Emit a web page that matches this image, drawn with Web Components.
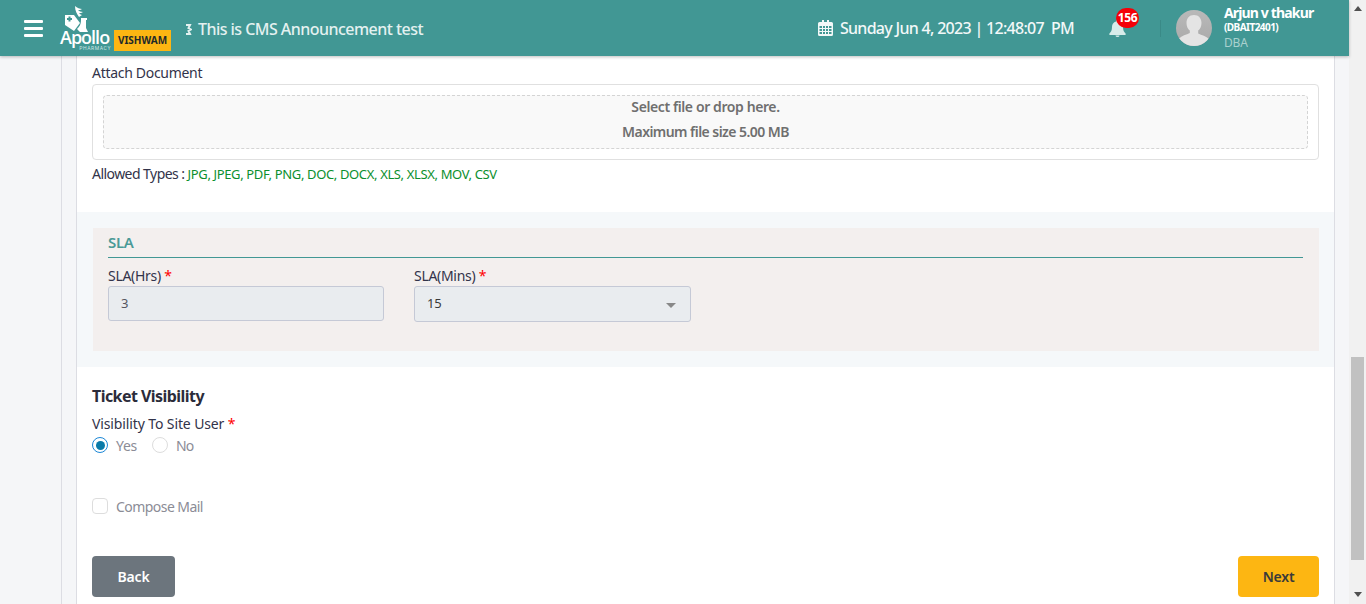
<!DOCTYPE html>
<html>
<head>
<meta charset="utf-8">
<title>Vishwam</title>
<style>
    html, body { margin: 0; height: 100%; overflow: hidden; }
    body { font-family: "Noto Sans", "Open Sans", sans-serif; font-size: 14px; color: #32334a; }
</style>
</head>
<body>
<app-shell>
    <app-header slot="header"></app-header>
    <attach-field></attach-field>
    <sla-panel></sla-panel>
    <ticket-visibility></ticket-visibility>
    <form-actions></form-actions>
</app-shell>

<script>
class AppShell extends HTMLElement {
    constructor() {
        super();
        this.attachShadow({ mode: 'open' });
    }
    connectedCallback() {
        this.shadowRoot.innerHTML = /*HTML*/ `
            <style>
                :host { display: flex; height: 604px; overflow: hidden; }
                .page { flex: 1; min-width: 0; display: flex; flex-direction: column; background: #f5f6f8; }
                .columns { flex: 1; display: flex; min-height: 0; }
                .rail { width: 61px; border-right: 1px solid #dcdde3; }
                .gutter { width: 14px; border-right: 1px solid #dcdde3; }
                .card { width: 1257px; background: #fff; border-right: 1px solid #dcdde3; }
                .track { width: 17px; background: #f1f1f1; display: flex; flex-direction: column; align-items: center; }
                .arrow-up { margin-top: 6px; border: 4px solid transparent; border-top: 0; border-bottom: 5px solid #505050; }
                .thumb { margin-top: 346px; width: 13px; height: 203px; background: #c1c1c1; }
                .arrow-down { margin-top: 32px; border: 4px solid transparent; border-bottom: 0; border-top: 5px solid #505050; }
            </style>
            <div class="page">
                <slot name="header"></slot>
                <div class="columns">
                    <div class="rail"></div>
                    <div class="gutter"></div>
                    <main class="card"><slot></slot></main>
                </div>
            </div>
            <div class="track">
                <span class="arrow-up"></span>
                <span class="thumb"></span>
                <span class="arrow-down"></span>
            </div>
        `;
    }
}
customElements.define('app-shell', AppShell);

class AppHeader extends HTMLElement {
    constructor() {
        super();
        this.attachShadow({ mode: 'open' });
    }
    connectedCallback() {
        this.shadowRoot.innerHTML = /*HTML*/ `
            <style>
                :host { display: flex; align-items: center; height: 56px; background: #419794; color: #fff; box-shadow: 0 1px 3px rgba(0,0,0,.25); position: relative; z-index: 2; }
                .menu { width: 19px; margin-left: 24px; display: flex; flex-direction: column; gap: 4px; }
                .menu i { display: block; height: 3px; background: #fff; border-radius: 1px; }
                .brand { margin-left: 17px; width: 111px; height: 56px; display: flex; align-items: flex-end; flex-shrink: 0; }
                .logo { width: 51px; height: 50px; margin-bottom: 5px; display: flex; flex-direction: column; align-items: flex-start; justify-content: flex-end; }
                .logo svg { margin-left: 5px; display: block; }
                .apollo { font: 600 18px/13px "Open Sans", sans-serif; letter-spacing: -1px; margin-top: -1px; }
                .pharmacy { font: 400 5px/6px "Roboto", sans-serif; letter-spacing: .6px; align-self: flex-end; color: #cfe5e3; margin-top: 1px; }
                .vishwam { margin: 0 0 5px 3px; width: 57px; height: 21px; background: #fdb612; color: #1f2a2a; font: 700 10px/21px "Noto Sans", sans-serif; text-align: center; }
                .news { margin-left: 14px; display: flex; align-items: center; gap: 6px; font-size: 16px; font-weight: 500; color: #e4f1f0; white-space: nowrap; letter-spacing: -.54px; padding-top: 2px; }
                .clock { margin-left: auto; display: flex; align-items: center; gap: 7px; font-size: 16px; font-weight: 500; white-space: pre; color: #f2f8f8; letter-spacing: -.7px; }
                .bell { margin-left: 35px; position: relative; width: 17px; height: 17px; margin-top: 1px; }
                .badge { position: absolute; left: 7px; top: -12px; min-width: 23px; height: 20px; border-radius: 10px; background: #f40008; font: 700 12px/20px "Noto Sans", sans-serif; text-align: center; letter-spacing: -.3px; }
                .divider { margin-left: 34px; width: 1px; height: 17px; background: #3a8a87; }
                .avatar { margin-left: 15px; flex-shrink: 0; }
                .who { margin: 0 13px 0 12px; width: 112px; display: flex; flex-direction: column; }
                .name { font-size: 14px; font-weight: 700; line-height: 14px; letter-spacing: -.85px; white-space: nowrap; margin-top: 1px; }
                .code { font-size: 10px; font-weight: 700; line-height: 14px; letter-spacing: -.55px; }
                .role { font-size: 12px; line-height: 16px; color: #a9d1cf; margin-top: 1px; letter-spacing: -.2px; }
            </style>
            <div class="menu"><i></i><i></i><i></i></div>
            <div class="brand">
                <div class="logo">
                    <svg width="24" height="26" viewBox="0 0 24 26" fill="#fff">
                        <path d="M0 9h9l6 8-6 8-9-6z"/>
                        <path d="M3.500 10.500h2v1.500h1.500v2h-1.500v1.500h-2v-1.500h-1.500v-2h1.500z" fill="#419794"/>
                        <path d="M10 0c2 2 5 3 7 3-1 1-3 1-4 1 1 1 3 2 5 2-1 1-3 1-4 1 1 1 2 2 3 2l-3 2c-2-3-4-6-4-11z"/>
                        <path d="M16 12h6v2h-1v8l2 4h-8l-3-3c2-2 4-4 4-9z"/>
                    </svg>
                    <span class="apollo">Apollo</span>
                    <span class="pharmacy">PHARMACY</span>
                </div>
                <div class="vishwam">VISHWAM</div>
            </div>
            <div class="news">
                <svg width="7" height="11" viewBox="0 0 7 11" fill="none" stroke="#e4f1f0" stroke-width="2"><path d="M1 1h4L3.500 4 6 5.500 3.500 7 5 10H1"/></svg>
                <span>This is CMS Announcement test</span>
            </div>
            <div class="clock">
                <svg width="15" height="16" viewBox="0 0 15 16" fill="#f2f8f8"><path d="M1.500 2H4V0h2v2h3V0h2v2h2.500A1.500 1.500 0 0 1 15 3.500v11a1.500 1.500 0 0 1-1.500 1.500h-12A1.500 1.500 0 0 1 0 14.500v-11A1.500 1.500 0 0 1 1.500 2z"/><path d="M1.500 6h2.500v2H1.500zM5 6h2v2H5zM8 6h2v2H8zM11 6h2.500v2H11zM1.500 9h2.500v2H1.500zM5 9h2v2H5zM8 9h2v2H8zM11 9h2.500v2H11zM1.500 12h2.500v2H1.500zM5 12h2v2H5zM8 12h2v2H8zM11 12h2.500v2H11z" fill="#419794"/></svg>
                <span>Sunday Jun 4, 2023 | 12:48:07  PM</span>
            </div>
            <div class="bell">
                <svg width="17" height="17" viewBox="0 0 17 17" fill="#d7ecea"><path d="M8.500 0a1.500 1.500 0 0 1 1.500 1.500C12.500 2.200 14 4.300 14 7c0 3.500 1 4.800 2.600 6.500V15H.4v-1.500C2 11.800 3 10.500 3 7c0-2.700 1.500-4.800 4-5.500A1.500 1.500 0 0 1 8.500 0z"/><path d="M6.500 15.500h4a2 1.500 0 0 1-4 0z"/></svg>
                <span class="badge">156</span>
            </div>
            <span class="divider"></span>
            <svg class="avatar" width="36" height="36" viewBox="0 0 36 36">
                <defs><clipPath id="c"><circle cx="18" cy="18" r="18"/></clipPath><linearGradient id="g" x1="0" y1="0" x2="0" y2="1"><stop offset="0" stop-color="#b9b9b9"/><stop offset="1" stop-color="#a9a9a9"/></linearGradient></defs>
                <g clip-path="url(#c)">
                    <rect width="36" height="36" fill="url(#g)"/>
                    <path d="M18 5c4.700 0 7.500 3.500 7.500 8 0 3.200-1.300 6-3.300 7.500v3c3.500 1.700 8 2.800 10.800 5.500V36H3v-7.500c2.800-2.700 7.300-3.800 10.800-5.500v-2.500C11.800 19 10.500 16.200 10.500 13c0-4.500 2.800-8 7.500-8z" fill="#e4e4e4"/>
                </g>
            </svg>
            <div class="who">
                <span class="name">Arjun v thakur</span>
                <span class="code">(DBAIT2401)</span>
                <span class="role">DBA</span>
            </div>
        `;
    }
}
customElements.define('app-header', AppHeader);

class AttachField extends HTMLElement {
    constructor() {
        super();
        this.attachShadow({ mode: 'open' });
    }
    connectedCallback() {
        this.shadowRoot.innerHTML = /*HTML*/ `
            <style>
                :host { display: block; padding: 8px 15px 0; height: 148px; box-sizing: border-box; letter-spacing: -.3px; }
                label { display: block; line-height: 18px; height: 20px; }
                .box { height: 76px; box-sizing: border-box; border: 1px solid #e0e0e0; border-radius: 4px; padding: 10px; }
                .drop { height: 54px; box-sizing: border-box; border: 1px dashed #d4d4d4; border-radius: 4px; background: #f9f9f9; text-align: center; font-weight: 600; color: #6f6f6f; display: flex; flex-direction: column; gap: 5px; padding-top: 1px; line-height: 20px; letter-spacing: -.4px; }
                .drop span + span { letter-spacing: -.55px; }
                p { margin: 5px 0 0; line-height: 18px; letter-spacing: -.55px; }
                b { font-weight: 400; font-size: 13px; letter-spacing: -.36px; color: #0b8f2e; }
            </style>
            <label>Attach Document</label>
            <div class="box">
                <div class="drop">
                    <span>Select file or drop here.</span>
                    <span>Maximum file size 5.00 MB</span>
                </div>
            </div>
            <p>Allowed Types : <b>JPG, JPEG, PDF, PNG, DOC, DOCX, XLS, XLSX, MOV, CSV</b></p>
        `;
    }
}
customElements.define('attach-field', AttachField);

class SlaPanel extends HTMLElement {
    constructor() {
        super();
        this.attachShadow({ mode: 'open' });
    }
    connectedCallback() {
        this.shadowRoot.innerHTML = /*HTML*/ `
            <style>
                :host { display: block; margin-top: 8px; background: #f5f8fa; padding: 16px 15px 16px 16px; letter-spacing: -.3px; }
                .panel { height: 123px; box-sizing: border-box; background: #f3efee; padding: 0 16px 0 15px; }
                h3 { margin: 0; height: 30px; box-sizing: border-box; border-bottom: 1px solid #419794; font-size: 15px; font-weight: 600; line-height: 28px; color: #4a9a97; }
                .fields { display: flex; gap: 30px; margin-top: 8px; }
                .field { width: 276px; }
                .field + .field { width: 277px; }
                label { display: block; line-height: 20px; height: 20px; }
                label em { font-style: normal; color: #f00; }
                .input { height: 35px; box-sizing: border-box; background: #e9ecef; border: 1px solid #c5c9d6; border-radius: 3px; padding: 0 12px; line-height: 31px; font-size: 13px; color: #55565f; display: flex; justify-content: space-between; align-items: center; }
                .field + .field .input { height: 36px; color: #3a3a3a; padding-bottom: 1px; }
                .caret { border: 5px solid transparent; border-bottom: 0; border-top: 5px solid #888; margin: 3px 2px 0 0; }
            </style>
            <div class="panel">
                <h3>SLA</h3>
                <div class="fields">
                    <div class="field">
                        <label>SLA(Hrs) <em>*</em></label>
                        <div class="input">3</div>
                    </div>
                    <div class="field">
                        <label>SLA(Mins) <em>*</em></label>
                        <div class="input"><span>15</span><span class="caret"></span></div>
                    </div>
                </div>
            </div>
        `;
    }
}
customElements.define('sla-panel', SlaPanel);

class TicketVisibility extends HTMLElement {
    constructor() {
        super();
        this.attachShadow({ mode: 'open' });
    }
    connectedCallback() {
        this.shadowRoot.innerHTML = /*HTML*/ `
            <style>
                :host { display: block; padding: 18px 15px 0; letter-spacing: -.3px; }
                h4 { margin: 0; font-size: 16px; font-weight: 700; line-height: 22px; letter-spacing: -.55px; color: #2b2c3a; }
                label { display: block; margin-top: 7px; line-height: 20px; letter-spacing: -.12px; }
                label em { font-style: normal; color: #f00; }
                .row { display: flex; align-items: center; height: 24px; color: #8b8c96; margin-top: -1px; }
                .radio { width: 16px; height: 16px; box-sizing: border-box; border-radius: 50%; border: 1px solid #ddd; background: #fff; margin-right: 8px; }
                .radio.on { border: 1.500px solid #1b87d6; padding: 2.500px; background: #0a7aa8 content-box; }
                .opt { margin-right: 15px; }
                .no { letter-spacing: -.8px; }
                .check { width: 16px; height: 16px; box-sizing: border-box; border: 1px solid #ddd; border-radius: 4px; background: #fff; margin-right: 8px; }
                .compose { margin-top: 37px; letter-spacing: -.55px; }
            </style>
            <h4>Ticket Visibility</h4>
            <label>Visibility To Site User <em>*</em></label>
            <div class="row">
                <span class="radio on"></span><span class="opt">Yes</span>
                <span class="radio"></span><span class="no">No</span>
            </div>
            <div class="row compose">
                <span class="check"></span><span>Compose Mail</span>
            </div>
        `;
    }
}
customElements.define('ticket-visibility', TicketVisibility);

class FormActions extends HTMLElement {
    constructor() {
        super();
        this.attachShadow({ mode: 'open' });
    }
    connectedCallback() {
        this.shadowRoot.innerHTML = /*HTML*/ `
            <style>
                :host { display: flex; justify-content: space-between; padding: 38px 15px 0; }
                button { height: 41px; border: 0; border-radius: 4px; font: 600 14px "Noto Sans", sans-serif; padding: 0; letter-spacing: -.2px; }
                .back { width: 83px; background: #6c757d; color: #fff; }
                .next { width: 81px; background: #fdb612; color: #3a3a3a; }
            </style>
            <button class="back">Back</button>
            <button class="next">Next</button>
        `;
    }
}
customElements.define('form-actions', FormActions);
</script>
</body>
</html>
